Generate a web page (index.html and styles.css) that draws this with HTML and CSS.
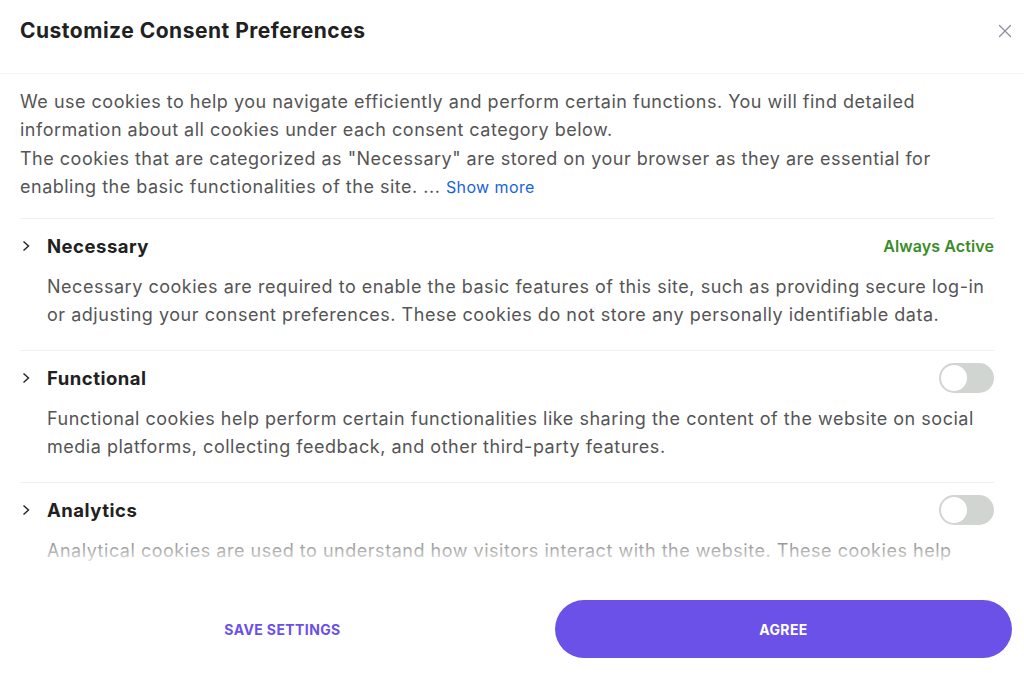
FILE: index.html
```html
<!DOCTYPE html>
<html lang="en">
<head>
<meta charset="utf-8">
<title>Customize Consent Preferences</title>
<link rel="stylesheet" href="styles.css">
</head>
<body>
<div class="modal">
  <header class="modal-header">
    <h1 class="modal-title">Customize Consent Preferences</h1>
    <button class="close-btn" aria-label="Close">
      <svg width="14" height="14" viewBox="0 0 14 14"><path d="M1.5 1.5 L12.5 12.5 M12.5 1.5 L1.5 12.5" stroke="#8a8f99" stroke-width="1.3" fill="none" stroke-linecap="round"/></svg>
    </button>
  </header>
  <div class="modal-body">
    <div class="intro">
      <p>We use cookies to help you navigate efficiently and perform certain functions. You will find detailed information about all cookies under each consent category below.</p>
      <p>The cookies that are categorized as "Necessary" are stored on your browser as they are essential for enabling the basic functionalities of the site. ... <a class="show-more" href="#">Show more</a></p>
    </div>

    <section class="category">
      <div class="cat-head">
        <svg class="chevron" width="10" height="12" viewBox="0 0 10 12"><path d="M2.5 1.5 L7.5 6 L2.5 10.5" stroke="#212121" stroke-width="1.4" fill="none"/></svg>
        <h2 class="cat-title">Necessary</h2>
        <span class="always-active">Always Active</span>
      </div>
      <p class="cat-desc">Necessary cookies are required to enable the basic features of this site, such as providing secure log-in or adjusting your consent preferences. These cookies do not store any personally identifiable data.</p>
    </section>

    <section class="category">
      <div class="cat-head">
        <svg class="chevron" width="10" height="12" viewBox="0 0 10 12"><path d="M2.5 1.5 L7.5 6 L2.5 10.5" stroke="#212121" stroke-width="1.4" fill="none"/></svg>
        <h2 class="cat-title">Functional</h2>
        <span class="toggle"><span class="knob"></span></span>
      </div>
      <p class="cat-desc">Functional cookies help perform certain functionalities like sharing the content of the website on social media platforms, collecting feedback, and other third-party features.</p>
    </section>

    <section class="category">
      <div class="cat-head">
        <svg class="chevron" width="10" height="12" viewBox="0 0 10 12"><path d="M2.5 1.5 L7.5 6 L2.5 10.5" stroke="#212121" stroke-width="1.4" fill="none"/></svg>
        <h2 class="cat-title">Analytics</h2>
        <span class="toggle"><span class="knob"></span></span>
      </div>
      <p class="cat-desc">Analytical cookies are used to understand how visitors interact with the website. These cookies help provide information on metrics such as the number of visitors, bounce rate, traffic source, etc.</p>
    </section>
    <div class="fade"></div>
  </div>
  <footer class="modal-footer">
    <button class="btn btn-save">SAVE SETTINGS</button>
    <button class="btn btn-agree">AGREE</button>
  </footer>
</div>
</body>
</html>
```

FILE: styles.css
```css
* { box-sizing: border-box; }
html, body { margin: 0; padding: 0; background: #ffffff; }
body {
  font-family: Inter, "Liberation Sans", Arial, sans-serif;
  color: #555555;
}
.modal {
  width: 1024px;
  height: 673px;
  display: flex;
  flex-direction: column;
  background: #fff;
}
.modal-header {
  height: 74px;
  flex: 0 0 74px;
  display: flex;
  align-items: center;
  justify-content: space-between;
  padding: 0 11px 12px 20px;
  border-bottom: 1px solid #f3f3f3;
}
.modal-title {
  margin: 0;
  font-size: 21px;
  font-weight: 700;
  color: #212121;
  letter-spacing: 0.5px;
}
.close-btn {
  background: none;
  border: 0;
  padding: 0;
  width: 16px;
  height: 16px;
  display: flex;
  align-items: center;
  justify-content: center;
}
.modal-body {
  position: relative;
  height: 498px;
  flex: 0 0 498px;
  overflow: hidden;
  padding: 14px 30px 0 20px;
}
.intro {
  font-size: 18px;
  letter-spacing: 0.5px;
  line-height: 28.3px;
  padding-bottom: 17px;
  border-bottom: 1px solid #f0f0f0;
}
.intro p { margin: 0; }
.show-more {
  color: #1863dc;
  text-decoration: none;
  font-size: 16px;
  letter-spacing: 0.4px;
}
.category {
  padding: 12px 0 21px;
  border-bottom: 1px solid #f0f0f0;
}
.cat-head {
  display: flex;
  align-items: center;
  height: 30px;
}
.chevron { margin-left: 1px; margin-right: 16px; }
.cat-title {
  margin: 0;
  font-size: 18.5px;
  font-weight: 700;
  letter-spacing: 0.5px;
  color: #212121;
  flex: 1;
}
.always-active {
  color: #3a8c28;
  font-weight: 600;
  font-size: 16px;
  letter-spacing: 0.1px;
}
.toggle {
  width: 55px;
  height: 30px;
  border-radius: 15px;
  background: #d0d5d2;
  display: flex;
  align-items: center;
  padding: 2px;
}
.knob {
  width: 26px;
  height: 26px;
  border-radius: 50%;
  background: #fff;
}
.cat-desc {
  margin: 12px 0 0;
  padding-left: 27px;
  font-size: 18px;
  letter-spacing: 0.52px;
  line-height: 28px;
}
.fade {
  position: absolute;
  left: 0;
  right: 0;
  bottom: 0;
  height: 50px;
  background: linear-gradient(to bottom, rgba(255,255,255,0) 0%, rgba(255,255,255,0.5) 55%, rgba(255,255,255,0.9) 85%, #fff 100%);
}
.modal-footer {
  flex: 1;
  display: flex;
  gap: 10px;
  padding: 28px 12px 15px 20px;
}
.btn {
  font-family: Inter, "Liberation Sans", Arial, sans-serif;
  font-size: 14px;
  font-weight: 700;
  letter-spacing: 0.4px;
  height: 58px;
  border-radius: 29px;
  border: 0;
  cursor: pointer;
}
.btn-save {
  width: 525px;
  background: #fff;
  color: #6b50e8;
}
.btn-agree {
  flex: 1;
  background: #6c51e8;
  color: #fff;
}
```
